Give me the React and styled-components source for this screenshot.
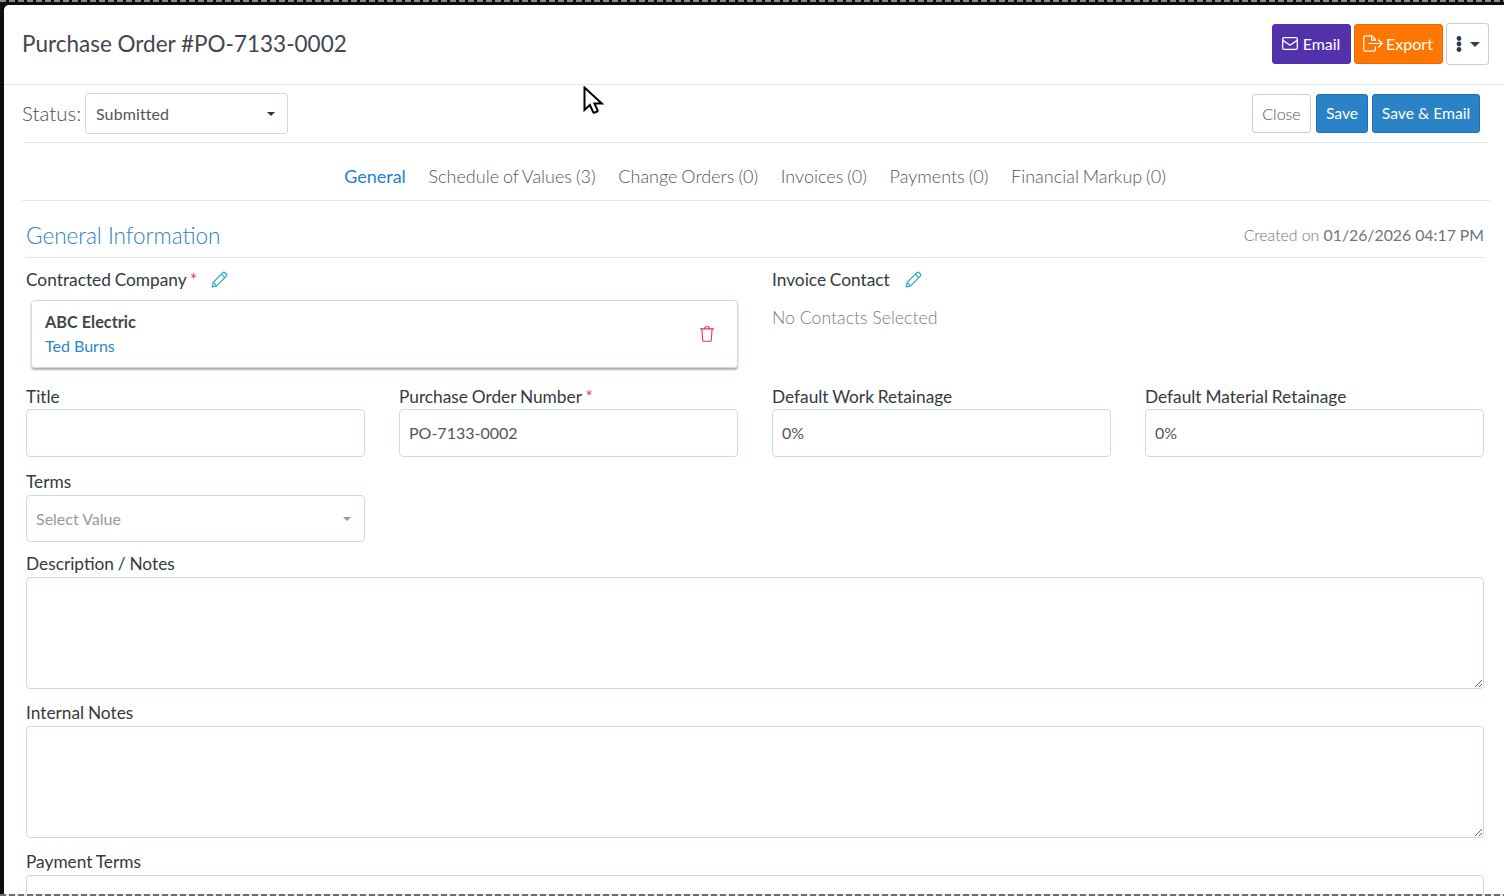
import styled, { createGlobalStyle } from "styled-components";

const GlobalStyle = createGlobalStyle`
  html, body {
    margin: 0;
    height: 100%;
    overflow: hidden;
    background: #0e0e0e;
    font-family: Lato, "Open Sans", sans-serif;
  }
`;

const tabs = [
  { label: "General", active: true },
  { label: "Schedule of Values (3)" },
  { label: "Change Orders (0)" },
  { label: "Invoices (0)" },
  { label: "Payments (0)" },
  { label: "Financial Markup (0)" },
];

function PencilIcon({ color }) {
  return (
    <svg width="17" height="17" viewBox="0 0 17 17" fill="none" stroke={color} strokeWidth="1.2" strokeLinejoin="round">
      <path d="M1.2 15.8l1-4.4L11.9 1.7a1.5 1.5 0 0 1 2.1 0l1.3 1.3a1.5 1.5 0 0 1 0 2.1L5.6 14.8z" />
      <path d="M10.4 3.2l3.4 3.4M2.2 11.4l3.4 3.4" />
    </svg>
  );
}

function TrashIcon() {
  return (
    <svg width="14" height="16" viewBox="0 0 14 16" fill="none" stroke="#e8344e" strokeWidth="1.1">
      <path d="M0 2.9h14M4.6 2.7l.7-1.9h3.4l.7 1.9" />
      <path d="M1.9 3l.8 11.2c.05.6.5 1 1.1 1h6.4c.6 0 1.05-.4 1.1-1L12.1 3" />
    </svg>
  );
}

function EnvelopeIcon() {
  return (
    <svg width="16" height="13" viewBox="0 0 16 13" fill="none" stroke="#fff" strokeWidth="1.3" strokeLinejoin="round">
      <rect x="0.7" y="0.7" width="14.6" height="11.6" rx="1.4" />
      <path d="M0.9 3.4L8 8.2l7.1-4.8" />
    </svg>
  );
}

function ExportIcon() {
  return (
    <svg width="20" height="17" viewBox="0 0 20 17" fill="none" stroke="#fff" strokeWidth="1.2" strokeLinejoin="round" strokeLinecap="round">
      <path d="M12.4 5.2V4.4L9 .8H2.2A1.4 1.4 0 0 0 .8 2.2v12.6a1.4 1.4 0 0 0 1.4 1.4h8.8a1.4 1.4 0 0 0 1.4-1.4v-3" />
      <path d="M8.6 .8v4.4h3.8M6 8.5h13M15.6 5l3.6 3.5-3.6 3.5" />
    </svg>
  );
}

function Kebab() {
  return (
    <svg width="6" height="16" viewBox="0 0 6 16" fill="#2c3a4d">
      <circle cx="3" cy="2.5" r="2.4" />
      <circle cx="3" cy="8" r="2.4" />
      <circle cx="3" cy="13.5" r="2.4" />
    </svg>
  );
}

export default function App() {
  return (
    <>
      <GlobalStyle />
      <DashTop />
      <Modal>
        <Header>
          <Title>Purchase Order #PO-7133-0002</Title>
          <HeaderActions>
            <ActionButton bg="#5331ad" border="#5331ad" width={79} gap={5}>
              <EnvelopeIcon /> Email
            </ActionButton>
            <ActionButton bg="#ff7700" border="#e56b00" width={89} gap={3}>
              <ExportIcon /> Export
            </ActionButton>
            <MoreButton>
              <Kebab />
              <Caret color="#333d4a" size={5} />
            </MoreButton>
          </HeaderActions>
        </Header>

        <StatusRow>
          <StatusLeft>
            <StatusLabel>Status:</StatusLabel>
            <StatusSelect>
              Submitted
              <Caret color="#333" drop={2} />
            </StatusSelect>
          </StatusLeft>
          <StatusActions>
            <CloseButton>Close</CloseButton>
            <SaveButton width={52}>Save</SaveButton>
            <SaveButton width={108}>Save &amp; Email</SaveButton>
          </StatusActions>
        </StatusRow>

        <TabBar>
          {tabs.map((tab) => (
            <Tab key={tab.label} active={tab.active}>{tab.label}</Tab>
          ))}
        </TabBar>

        <Content>
          <SectionHead>
            <SectionTitle>General Information</SectionTitle>
            <Created>Created on <strong>01/26/2026 04:17 PM</strong></Created>
          </SectionHead>

          <ContactRow>
            <div>
              <ContactLabel gap={14}>
                <span>Contracted Company <Required>*</Required></span>
                <PencilIcon color="#25a9c4" />
              </ContactLabel>
              <CompanyCard>
                <div>
                  <CompanyName>ABC Electric</CompanyName>
                  <CompanyContact>Ted Burns</CompanyContact>
                </div>
                <TrashIcon />
              </CompanyCard>
            </div>
            <div>
              <ContactLabel gap={15}>
                <span>Invoice Contact</span>
                <PencilIcon color="#25a9c4" />
              </ContactLabel>
              <NoContacts>No Contacts Selected</NoContacts>
            </div>
          </ContactRow>

          <FieldGrid>
            <Field>
              <Label>Title</Label>
              <TextInput />
            </Field>
            <Field>
              <Label>Purchase Order Number <Required>*</Required></Label>
              <TextInput defaultValue="PO-7133-0002" />
            </Field>
            <Field>
              <Label>Default Work Retainage</Label>
              <TextInput defaultValue="0%" />
            </Field>
            <Field>
              <Label>Default Material Retainage</Label>
              <TextInput defaultValue="0%" />
            </Field>
            <Field>
              <Label>Terms</Label>
              <TermsSelect>
                Select Value
                <Caret color="#999" drop={1} />
              </TermsSelect>
            </Field>
          </FieldGrid>

          <NotesLabel>Description / Notes</NotesLabel>
          <NotesArea />
          <NotesLabel>Internal Notes</NotesLabel>
          <NotesArea />
          <NotesLabel>Payment Terms</NotesLabel>
          <NotesArea />
        </Content>
      </Modal>
      <DashBottom />
      <Cursor width="22" height="30" viewBox="0 0 22 30">
        <path
          d="M1.5 1.5v22.5l5.4-5 3.2 7 .8.8 3.4-1.4.3-1-3.2-6.9h7.4z"
          fill="#fff"
          stroke="#000"
          strokeWidth="2"
          strokeLinejoin="miter"
        />
      </Cursor>
    </>
  );
}

const DashTop = styled.div`
  position: fixed;
  top: 0;
  left: 0;
  right: 0;
  height: 2px;
  background: repeating-linear-gradient(90deg, #8a8a80 0 6px, #0e0e0e 6px 9px);
`;

const DashBottom = styled.div`
  position: fixed;
  bottom: 0;
  left: 0;
  right: 0;
  height: 2px;
  background: repeating-linear-gradient(90deg, #6d6d6d 0 6px, #e8e8e8 6px 9px);
`;

const Cursor = styled.svg`
  position: fixed;
  left: 583px;
  top: 86px;
`;

const Modal = styled.div`
  margin: 5px 0 0 4px;
  width: 1500px;
  height: 891px;
  overflow: hidden;
  background: #fff;
  border-top-left-radius: 5px;
  color: #343a40;
`;

const Header = styled.div`
  display: flex;
  align-items: center;
  justify-content: space-between;
  box-sizing: border-box;
  height: 80px;
  padding: 0 15px 1px 18px;
  border-bottom: 1px solid #dee6ee;
`;

const Title = styled.h4`
  margin: 0 0 2px;
  font-size: 22.5px;
  font-weight: 400;
  color: #3f4650;
`;

const HeaderActions = styled.div`
  display: flex;
  align-items: center;
  gap: 3px;
`;

const ActionButton = styled.div`
  display: flex;
  align-items: center;
  justify-content: center;
  gap: ${(props) => props.gap}px;
  box-sizing: border-box;
  width: ${(props) => props.width}px;
  height: 40px;
  padding: 0 1px 1px 0;
  background: ${(props) => props.bg};
  border: 1px solid ${(props) => props.border};
  border-radius: 3px;
  color: #fff;
  font-size: 16px;
`;

const MoreButton = styled.div`
  display: flex;
  align-items: center;
  justify-content: center;
  gap: 8px;
  box-sizing: border-box;
  width: 43px;
  height: 42px;
  background: #fff;
  border: 1px solid #cfc8d0;
  border-radius: 3px;
`;

const Caret = styled.span`
  display: inline-block;
  width: 0;
  height: 0;
  margin-top: ${(props) => props.drop || 0}px;
  border-left: ${(props) => props.size || 4.5}px solid transparent;
  border-right: ${(props) => props.size || 4.5}px solid transparent;
  border-top: ${(props) => props.size || 4.5}px solid ${(props) => props.color};
`;

const StatusRow = styled.div`
  display: flex;
  align-items: center;
  justify-content: space-between;
  box-sizing: border-box;
  height: 58px;
  margin-left: 20px;
  margin-right: 16px;
  padding-bottom: 1px;
  border-bottom: 1px solid #dee6ee;
`;

const StatusLeft = styled.div`
  display: flex;
  align-items: center;
  gap: 4px;
  margin-left: -2px;
`;

const StatusLabel = styled.span`
  width: 59px;
  font-size: 20.5px;
  font-weight: 300;
  color: #4a4f55;
`;

const StatusSelect = styled.div`
  display: flex;
  align-items: center;
  justify-content: space-between;
  box-sizing: border-box;
  width: 203px;
  height: 41px;
  padding: 0 12px 0 10px;
  border: 1px solid #ccdbe2;
  border-radius: 3px;
  font-size: 16px;
  letter-spacing: 0.1px;
  color: #555;
`;

const StatusActions = styled.div`
  display: flex;
  align-items: center;
  gap: 4px;
  margin-right: -12px;
  padding-right: 20px;
`;

const CloseButton = styled.div`
  display: flex;
  align-items: center;
  justify-content: center;
  box-sizing: border-box;
  width: 59px;
  height: 39px;
  margin-right: 1px;
  border: 1px solid #cfc8d0;
  border-radius: 3px;
  font-size: 16px;
  font-weight: 300;
  color: #555;
`;

const SaveButton = styled.div`
  display: flex;
  align-items: center;
  justify-content: center;
  box-sizing: border-box;
  width: ${(props) => props.width}px;
  height: 39px;
  background: #2a83c6;
  border: 1px solid #1a72b5;
  border-radius: 3px;
  font-size: 15.7px;
  color: #fff;
`;

const TabBar = styled.div`
  display: flex;
  justify-content: center;
  align-items: center;
  gap: 22.7px;
  box-sizing: border-box;
  height: 58px;
  margin: 0 14px 0 18px;
  padding: 8px 2px 0 0;
  border-bottom: 1px solid #dee6ee;
`;

const Tab = styled.span`
  font-size: 18px;
  word-spacing: -1px;
  font-weight: ${(props) => (props.active ? 400 : 300)};
  color: ${(props) => (props.active ? "#1e7fd6" : "#50565c")};
`;

const Content = styled.div`
  padding: 0 20px 0 22px;
`;

const SectionHead = styled.div`
  display: flex;
  align-items: center;
  justify-content: space-between;
  box-sizing: border-box;
  height: 57px;
  padding-top: 12px;
  border-bottom: 1px solid #dee6ee;
`;

const SectionTitle = styled.h4`
  margin: 0;
  font-size: 22.5px;
  font-weight: 300;
  color: #2a83c6;
`;

const Created = styled.span`
  margin-bottom: 2px;
  font-size: 15.8px;
  font-weight: 300;
  color: #6c757d;
  strong {
    font-weight: 400;
    color: #6c757d;
  }
`;

const ContactRow = styled.div`
  display: grid;
  grid-template-columns: 712px 712px;
  column-gap: 34px;
  height: 125px;
`;

const ContactLabel = styled.div`
  display: flex;
  align-items: center;
  gap: ${(props) => props.gap}px;
  height: 20px;
  margin-top: 11px;
  font-size: 17.3px;
  word-spacing: -0.6px;
  color: #343a40;
`;

const Required = styled.span`
  color: #e8344e;
  font-size: 17px;
`;

const CompanyCard = styled.div`
  display: flex;
  align-items: center;
  justify-content: space-between;
  box-sizing: border-box;
  width: 707px;
  height: 68px;
  margin: 11px 0 0 5px;
  padding: 0 23px 0 13px;
  border: 1px solid #c5dfe3;
  border-radius: 4px;
  box-shadow: 0 2px 2px rgba(60, 80, 90, 0.45);
`;

const CompanyName = styled.div`
  font-size: 16.3px;
  font-weight: 700;
  color: #40464c;
  line-height: 22px;
  margin-bottom: 2px;
`;

const CompanyContact = styled.div`
  font-size: 16px;
  color: #2a8ac6;
  line-height: 22px;
`;

const NoContacts = styled.div`
  margin-top: 18px;
  font-size: 17.7px;
  font-weight: 300;
  color: #777c88;
`;

const FieldGrid = styled.div`
  display: grid;
  grid-template-columns: repeat(4, 339px);
  column-gap: 34px;
  row-gap: 11px;
  margin-bottom: 14px;
`;

const Field = styled.div`
  display: flex;
  flex-direction: column;
`;

const Label = styled.label`
  display: block;
  height: 14px;
  line-height: 14px;
  margin-top: 7px;
  margin-bottom: 6px;
  font-size: 17.3px;
  word-spacing: -0.6px;
  color: #343a40;
`;

const NotesLabel = styled(Label)`
  margin-top: 0;
  margin-bottom: 7px;
  line-height: 16px;
`;

const TextInput = styled.input`
  box-sizing: border-box;
  width: 100%;
  height: 48px;
  margin-top: -1px;
  padding: 0 9px 2px;
  border: 1px solid #c5dfe3;
  border-radius: 4px;
  font-family: inherit;
  font-size: 16px;
  color: #555;
  outline: none;
`;

const TermsSelect = styled.div`
  display: flex;
  align-items: center;
  justify-content: space-between;
  box-sizing: border-box;
  height: 47px;
  padding: 0 13px 0 9px;
  border: 1px solid #c5dfe3;
  border-radius: 4px;
  font-size: 16px;
  color: #999;
`;

const NotesArea = styled.textarea`
  display: block;
  box-sizing: border-box;
  width: 100%;
  height: 112px;
  margin-bottom: 16px;
  border: 1px solid #c5dfe3;
  border-radius: 4px;
  outline: none;
  resize: vertical;
`;
